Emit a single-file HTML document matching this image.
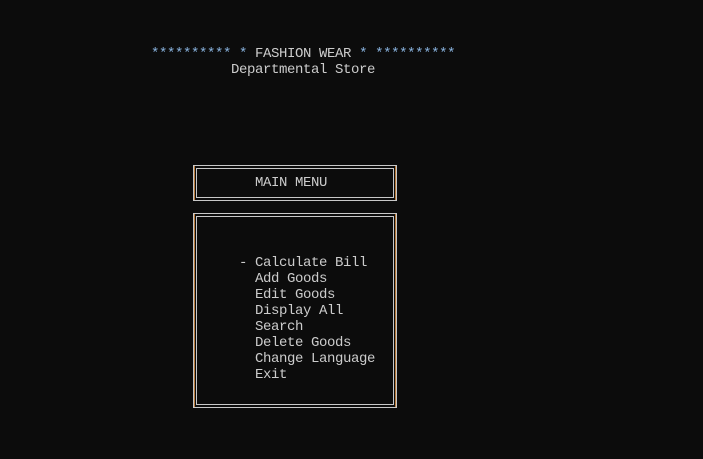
<!DOCTYPE html>
<html><head><style>
html,body{margin:0;padding:0;background:#0c0c0c;width:703px;height:459px;overflow:hidden}
.t{position:absolute;font-family:"Liberation Mono",monospace;font-size:14px;letter-spacing:-0.4px;line-height:16px;color:#cccccc;white-space:pre}
.b{position:absolute;border:1px solid #c8c8c8;box-sizing:border-box}
.o{position:absolute;background:#b87a3a;width:1px}
</style></head><body>
<div class="t" style="left:151px;top:46px"><span style="color:#8ab4e0">********** *</span> FASHION WEAR <span style="color:#8ab4e0">* **********</span></div>
<div class="t" style="left:231px;top:62px">Departmental Store</div>

<div class="b" style="left:193px;top:165px;width:204px;height:36px"></div>
<div class="b" style="left:196px;top:168px;width:198px;height:30px"></div>
<div class="o" style="left:194px;top:166px;height:34px"></div>
<div class="o" style="left:395px;top:166px;height:34px"></div>
<div class="t" style="left:255px;top:175px">MAIN MENU</div>

<div class="b" style="left:193px;top:213px;width:204px;height:195px"></div>
<div class="b" style="left:196px;top:216px;width:198px;height:189px"></div>
<div class="o" style="left:194px;top:214px;height:193px"></div>
<div class="o" style="left:395px;top:214px;height:193px"></div>
<div class="t" style="left:239px;top:255px">- Calculate Bill
  Add Goods
  Edit Goods
  Display All
  Search
  Delete Goods
  Change Language
  Exit</div>
</body></html>
